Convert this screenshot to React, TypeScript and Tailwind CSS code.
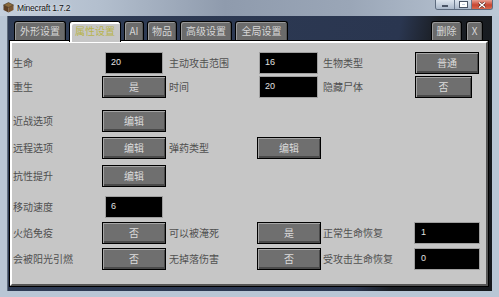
import type { ReactNode } from 'react';

const cjk = "font-['Noto_Sans_CJK_SC','Noto_Sans',sans-serif]";
const row = 'grid grid-cols-[89px_64px_91px_64px_94px_64px] items-center h-[23px]';

function Label({ children, className = '' }: { children: ReactNode; className?: string }) {
  return (
    <span className={`text-[10px] leading-none text-[#505050] whitespace-nowrap ${className}`}>
      {children}
    </span>
  );
}

function McButton({ children, className = 'w-[64px]' }: { children: ReactNode; className?: string }) {
  return (
    <div
      className={`h-[22px] flex items-center justify-center border border-black bg-[#6f6f6f] text-[10px] leading-none text-[#dcdcdc] shadow-[inset_1px_1px_0_#a5a5a5,inset_-1px_-2px_0_#4a4a4a] ${className}`}
    >
      {children}
    </div>
  );
}

function Field({ value, className = '' }: { value: string; className?: string }) {
  return (
    <div
      className={`h-[22px] flex items-center pl-[5px] bg-black border border-[#a0a0a0] text-[9px] leading-none text-[#e0e0e0] font-['Liberation_Sans',sans-serif] ${className}`}
    >
      {value}
    </div>
  );
}

function Tab({ label, width, active = false }: { label: string; width: string; active?: boolean }) {
  if (active) {
    return (
      <div
        className={`${width} h-[21px] -mb-[2px] relative z-10 flex items-center justify-center pb-[2px] rounded-t-[3px] border border-b-0 border-black bg-[#c6c6c6] shadow-[inset_1px_1px_0_#ffffff,inset_2px_2px_0_#ffffff] text-[10px] leading-none text-[#b8b44c]`}
      >
        {label}
      </div>
    );
  }
  return (
    <div
      className={`${width} h-[19px] flex items-center justify-center rounded-t-[3px] border border-b-0 border-black bg-[#6b6b6b] shadow-[inset_1px_1px_0_#999999,inset_-1px_0_0_#555555] text-[10px] leading-none text-[#d6d6d6]`}
    >
      {label}
    </div>
  );
}

export default function App() {
  return (
    <div className="w-[499px] h-[297px] flex flex-col overflow-hidden bg-[#b9c6d5]">
      {/* title bar */}
      <div className="h-[16px] flex items-start bg-[linear-gradient(90deg,#c4cfdc_0%,#b3bfce_20%,#8f9bad_45%,#9aa6b7_70%,#bcc8d6_100%)]">
        <svg width="11" height="11" viewBox="0 0 11 11" className="mt-[2px] ml-[3px]">
          <polygon points="5.5,0.5 10.5,3 5.5,5.5 0.5,3" fill="#8a6a3c" />
          <polygon points="0.5,3 5.5,5.5 5.5,10.5 0.5,8" fill="#5e3f22" />
          <polygon points="5.5,5.5 10.5,3 10.5,8 5.5,10.5" fill="#7a5530" />
          <polygon points="5.5,0.5 10.5,3 5.5,5.5 0.5,3" fill="none" stroke="#3a2814" strokeWidth="0.5" />
        </svg>
        <span className="ml-[3px] mt-[3px] text-[8.5px] leading-[10px] tracking-[-0.2px] text-[#111] font-['Liberation_Sans',sans-serif] [text-shadow:0_0_3px_#fff]">
          Minecraft 1.7.2
        </span>
        <div className="ml-auto mr-[6px] flex h-[10px] rounded-b-[3px] overflow-hidden border border-t-0 border-[#5d6b7e]">
          <div className="w-[19px] flex items-end justify-center pb-[2px] bg-[linear-gradient(180deg,#dde5ee,#aab8ca)] border-r border-[#6b7a8d]">
            <div className="w-[6px] h-[2px] bg-white border border-[#4a5566]" />
          </div>
          <div className="w-[17px] flex items-center justify-center bg-[linear-gradient(180deg,#dde5ee,#aab8ca)] border-r border-[#6b7a8d]">
            <div className="w-[7px] h-[5px] border-2 border-white outline outline-1 outline-[#4a5566]" />
          </div>
          <div className="w-[20px] flex items-center justify-center bg-[linear-gradient(180deg,#e8a193,#c84530_55%,#d5684e)]">
            <svg width="8" height="6" viewBox="0 0 8 6">
              <path d="M1 0.5 L7 5.5 M7 0.5 L1 5.5" stroke="#4a1a12" strokeWidth="2.6" />
              <path d="M1 0.5 L7 5.5 M7 0.5 L1 5.5" stroke="#ffffff" strokeWidth="1.5" />
            </svg>
          </div>
        </div>
      </div>

      {/* client area */}
      <div className="flex-1 mx-[7px] mb-[6px] border-l border-[#5f6c7c] bg-[linear-gradient(100deg,#2f3c55_0%,#2a3650_74%,#1b1f25_81%,#15181c_100%)]">
        <div className={`ml-[1px] w-[480px] pt-[5px] ${cjk}`}>
          <div className="flex items-end justify-between pl-[5px] pr-[6px]">
            <div className="flex items-end gap-[3px]">
              <Tab label="外形设置" width="w-[52px]" />
              <Tab label="属性设置" width="w-[52px]" active />
              <Tab label="AI" width="w-[20px]" />
              <Tab label="物品" width="w-[30px]" />
              <Tab label="高级设置" width="w-[52px]" />
              <Tab label="全局设置" width="w-[53px]" />
            </div>
            <div className="flex items-end gap-[4px]">
              <Tab label="删除" width="w-[31px]" />
              <Tab label="X" width="w-[17px]" />
            </div>
          </div>

          {/* panel */}
          <div className="w-[480px] h-[247px] bg-black p-px">
            <div className="h-full border-2 border-t-white border-l-white border-r-[#555555] border-b-[#555555] bg-[#c6c6c6] pt-[8px] pl-px">
              <div className={row}>
                <Label>生命</Label>
                <Field value="20" className="w-[58px] ml-[3px]" />
                <Label className="pl-[3px]">主动攻击范围</Label>
                <Field value="16" className="w-[59px] ml-[2px]" />
                <Label className="pl-[2px]">生物类型</Label>
                <McButton>普通</McButton>
              </div>
              <div className={`${row} mt-[1px]`}>
                <Label>重生</Label>
                <McButton>是</McButton>
                <Label className="pl-[3px]">时间</Label>
                <Field value="20" className="w-[59px] ml-[2px]" />
                <Label className="pl-[2px]">隐藏尸体</Label>
                <McButton className="w-[57px]">否</McButton>
              </div>
              <div className={`${row} mt-[11px]`}>
                <Label>近战选项</Label>
                <McButton>编辑</McButton>
              </div>
              <div className={`${row} mt-[4px]`}>
                <Label>远程选项</Label>
                <McButton>编辑</McButton>
                <Label className="pl-[3px]">弹药类型</Label>
                <McButton>编辑</McButton>
              </div>
              <div className={`${row} mt-[5px]`}>
                <Label>抗性提升</Label>
                <McButton>编辑</McButton>
              </div>
              <div className={`${row} mt-[8px]`}>
                <Label>移动速度</Label>
                <Field value="6" className="w-[58px] ml-[3px]" />
              </div>
              <div className={`${row} mt-[3px]`}>
                <Label>火焰免疫</Label>
                <McButton>否</McButton>
                <Label className="pl-[3px]">可以被淹死</Label>
                <McButton>是</McButton>
                <Label className="pl-[2px]">正常生命恢复</Label>
                <Field value="1" className="w-[66px] -ml-px pl-[6px]" />
              </div>
              <div className={`${row} mt-[3px]`}>
                <Label>会被阳光引燃</Label>
                <McButton>否</McButton>
                <Label className="pl-[3px]">无掉落伤害</Label>
                <McButton>否</McButton>
                <Label className="pl-[2px]">受攻击生命恢复</Label>
                <Field value="0" className="w-[66px] -ml-px pl-[6px]" />
              </div>
            </div>
          </div>
        </div>
      </div>
    </div>
  );
}
